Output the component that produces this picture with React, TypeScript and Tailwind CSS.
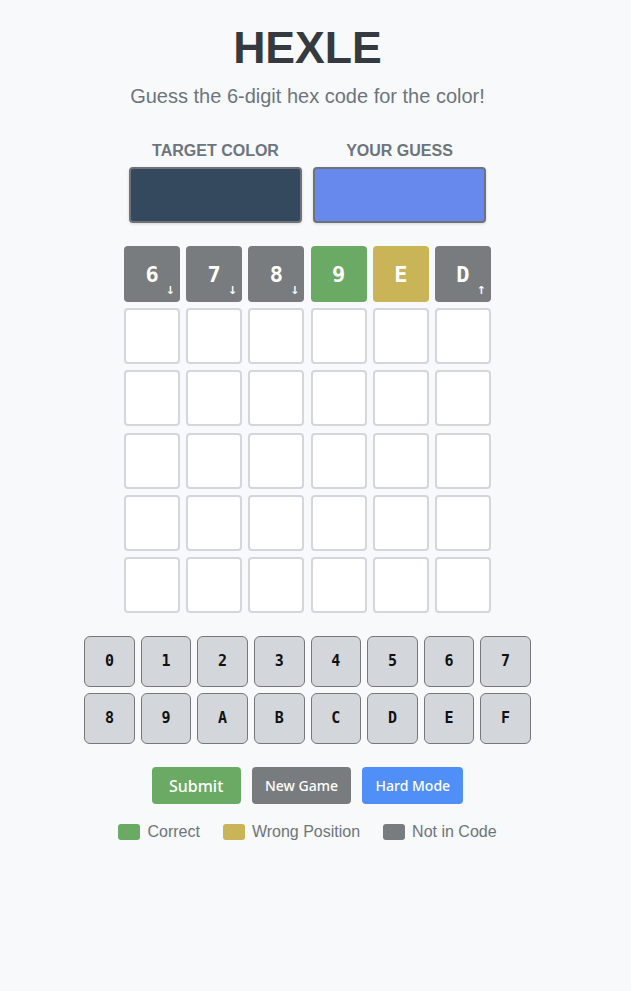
import React from "react";

const tiles = [
  { ch: "6", bg: "bg-[#787c7e]", arrow: "↓" },
  { ch: "7", bg: "bg-[#787c7e]", arrow: "↓" },
  { ch: "8", bg: "bg-[#787c7e]", arrow: "↓" },
  { ch: "9", bg: "bg-[#6aaa64]", arrow: "" },
  { ch: "E", bg: "bg-[#c9b458]", arrow: "" },
  { ch: "D", bg: "bg-[#787c7e]", arrow: "↑" },
];

const keys1 = ["0", "1", "2", "3", "4", "5", "6", "7"];
const keys2 = ["8", "9", "A", "B", "C", "D", "E", "F"];

const mono = { fontFamily: '"DejaVu Sans Mono", monospace' };

function Key({ k }: { k: string }) {
  return (
    <div
      className="w-[50.6px] h-[51px] rounded-[6px] border border-[#74787c] bg-[#d3d6da] flex items-center justify-center text-[15px] font-bold text-[#111]"
      style={mono}
    >
      {k}
    </div>
  );
}

export default function App() {
  return (
    <div
      className="min-h-screen bg-[#f8f9fa]"
      style={{ fontFamily: '"Liberation Sans", Arial, sans-serif' }}
    >
      <div className="w-[615px] flex flex-col items-center pt-[26px]">
        <h1 className="text-[44.6px] leading-[44px] font-bold text-[#343a40]">HEXLE</h1>
        <p className="mt-[16px] text-xl leading-none text-[#6c757d]">
          Guess the 6-digit hex code for the color!
        </p>

        <div className="mt-[37px] flex gap-[11px]">
          <div className="flex flex-col items-center w-[173px]">
            <div className="text-base leading-none font-bold text-[#6c757d]">TARGET COLOR</div>
            <div className="mt-[8px] w-[173px] h-[56px] rounded-[4px] border-2 border-[#6f7377] bg-[#34495e] shadow-[0_1px_3px_rgba(0,0,0,0.15)]" />
          </div>
          <div className="flex flex-col items-center w-[173px]">
            <div className="text-base leading-none font-bold text-[#6c757d]">YOUR GUESS</div>
            <div className="mt-[8px] w-[173px] h-[56px] rounded-[4px] border-2 border-[#6f7377] bg-[#6789ed] shadow-[0_1px_3px_rgba(0,0,0,0.15)]" />
          </div>
        </div>

        <div className="mt-[23px] flex flex-col gap-[6.2px]">
          <div className="flex gap-[6.2px]">
            {tiles.map((t, i) => (
              <div
                key={i}
                className={`relative w-[56px] h-[56px] rounded-[4px] ${t.bg} flex items-center justify-center text-white text-[22px] font-bold`}
                style={mono}
              >
                {t.ch}
                {t.arrow && (
                  <span
                    className="absolute right-[5px] bottom-[6px] text-[11px] leading-none font-bold text-white"
                    style={{ fontFamily: '"DejaVu Sans", sans-serif' }}
                  >
                    {t.arrow}
                  </span>
                )}
              </div>
            ))}
          </div>
          {[0, 1, 2, 3, 4].map((r) => (
            <div key={r} className="flex gap-[6.2px]">
              {[0, 1, 2, 3, 4, 5].map((c) => (
                <div
                  key={c}
                  className="w-[56px] h-[56px] rounded-[4px] border-2 border-[#d3d6da] bg-white"
                />
              ))}
            </div>
          ))}
        </div>

        <div className="mt-[23px] flex flex-col gap-[6px]">
          <div className="flex gap-[6px]">
            {keys1.map((k) => (
              <Key key={k} k={k} />
            ))}
          </div>
          <div className="flex gap-[6px]">
            {keys2.map((k) => (
              <Key key={k} k={k} />
            ))}
          </div>
        </div>

        <div
          className="mt-[23px] flex gap-[11.6px]"
          style={{ fontFamily: '"Noto Sans", sans-serif' }}
        >
          <button className="w-[89px] h-[37.5px] rounded-[4px] bg-[#6aaa64] text-white text-base font-medium flex items-center justify-center">
            Submit
          </button>
          <button className="w-[98.5px] h-[37.5px] rounded-[4px] bg-[#787c7e] text-white text-sm font-medium flex items-center justify-center">
            New Game
          </button>
          <button className="w-[101px] h-[37.5px] rounded-[4px] bg-[#4f8ff7] text-white text-sm font-medium flex items-center justify-center">
            Hard Mode
          </button>
        </div>

        <div className="mt-[16px] flex items-center gap-[23px] text-base text-[#6c757d]">
          <div className="flex items-center gap-[7px]">
            <div className="w-[22px] h-[16px] rounded-[3px] bg-[#6aaa64]" />
            <span>Correct</span>
          </div>
          <div className="flex items-center gap-[7px]">
            <div className="w-[22px] h-[16px] rounded-[3px] bg-[#c9b458]" />
            <span>Wrong Position</span>
          </div>
          <div className="flex items-center gap-[7px]">
            <div className="w-[22px] h-[16px] rounded-[3px] bg-[#787c7e]" />
            <span>Not in Code</span>
          </div>
        </div>
      </div>
    </div>
  );
}
